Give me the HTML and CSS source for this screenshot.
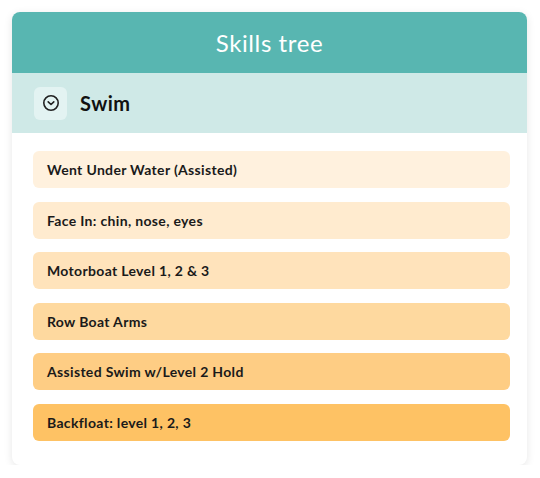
FILE: index.html
```html
<!DOCTYPE html>
<html>
<head>
<meta charset="utf-8">
<link rel="stylesheet" href="styles.css">
</head>
<body>
<div class="card">
  <div class="title">Skills tree</div>
  <div class="section">
    <div class="toggle">
      <svg width="18" height="18" viewBox="0 0 18 18" fill="none" stroke="#222" stroke-width="1.6" stroke-linecap="round" stroke-linejoin="round">
        <circle cx="9" cy="9" r="7.2"/>
        <path d="M6.2 7.8 L9 10.5 L11.8 7.8"/>
      </svg>
    </div>
    <div class="section-name">Swim</div>
  </div>
  <div class="list">
    <div class="item c1">Went Under Water (Assisted)</div>
    <div class="item c2">Face In: chin, nose, eyes</div>
    <div class="item c3">Motorboat Level 1, 2 &amp; 3</div>
    <div class="item c4">Row Boat Arms</div>
    <div class="item c5">Assisted Swim w/Level 2 Hold</div>
    <div class="item c6">Backfloat: level 1, 2, 3</div>
  </div>
</div>
</body>
</html>
```

FILE: styles.css
```css
* { box-sizing: border-box; }
html, body { margin: 0; padding: 0; background: #ffffff; }
body {
  padding: 12px 13px 0 12px;
  font-family: "Lato", "Open Sans", sans-serif;
  color: #1a1a1a;
}
.card {
  width: 515px;
  height: 453px;
  border-radius: 8px;
  overflow: hidden;
  background: #fff;
  box-shadow: 0 2px 8px rgba(0,0,0,0.10);
}
.title {
  height: 61px;
  background: #58b6b1;
  color: #fff;
  font-size: 24px;
  letter-spacing: 0.6px;
  display: flex;
  align-items: center;
  justify-content: center;
}
.section {
  height: 60px;
  background: #cfe9e7;
  display: flex;
  align-items: center;
  padding-left: 22px;
  gap: 13px;
}
.toggle {
  width: 33px;
  height: 33px;
  border-radius: 6px;
  background: #e3f3f2;
  display: flex;
  align-items: center;
  justify-content: center;
}
.section-name {
  font-size: 20px;
  font-weight: 700;
  letter-spacing: 0.5px;
  color: #111;
}
.list {
  padding: 18px 17px 0 21px;
  display: flex;
  flex-direction: column;
  gap: 13.5px;
}
.item {
  height: 37px;
  border-radius: 6px;
  display: flex;
  align-items: center;
  padding-left: 14px;
  font-size: 14px;
  font-weight: 700;
  letter-spacing: 0.33px;
  color: #1a1a1a;
}
.c1 { background: #fff1de; }
.c2 { background: #ffebcf; }
.c3 { background: #ffe3bb; }
.c4 { background: #fed99f; }
.c5 { background: #fecd84; }
.c6 { background: #fec264; }
```
